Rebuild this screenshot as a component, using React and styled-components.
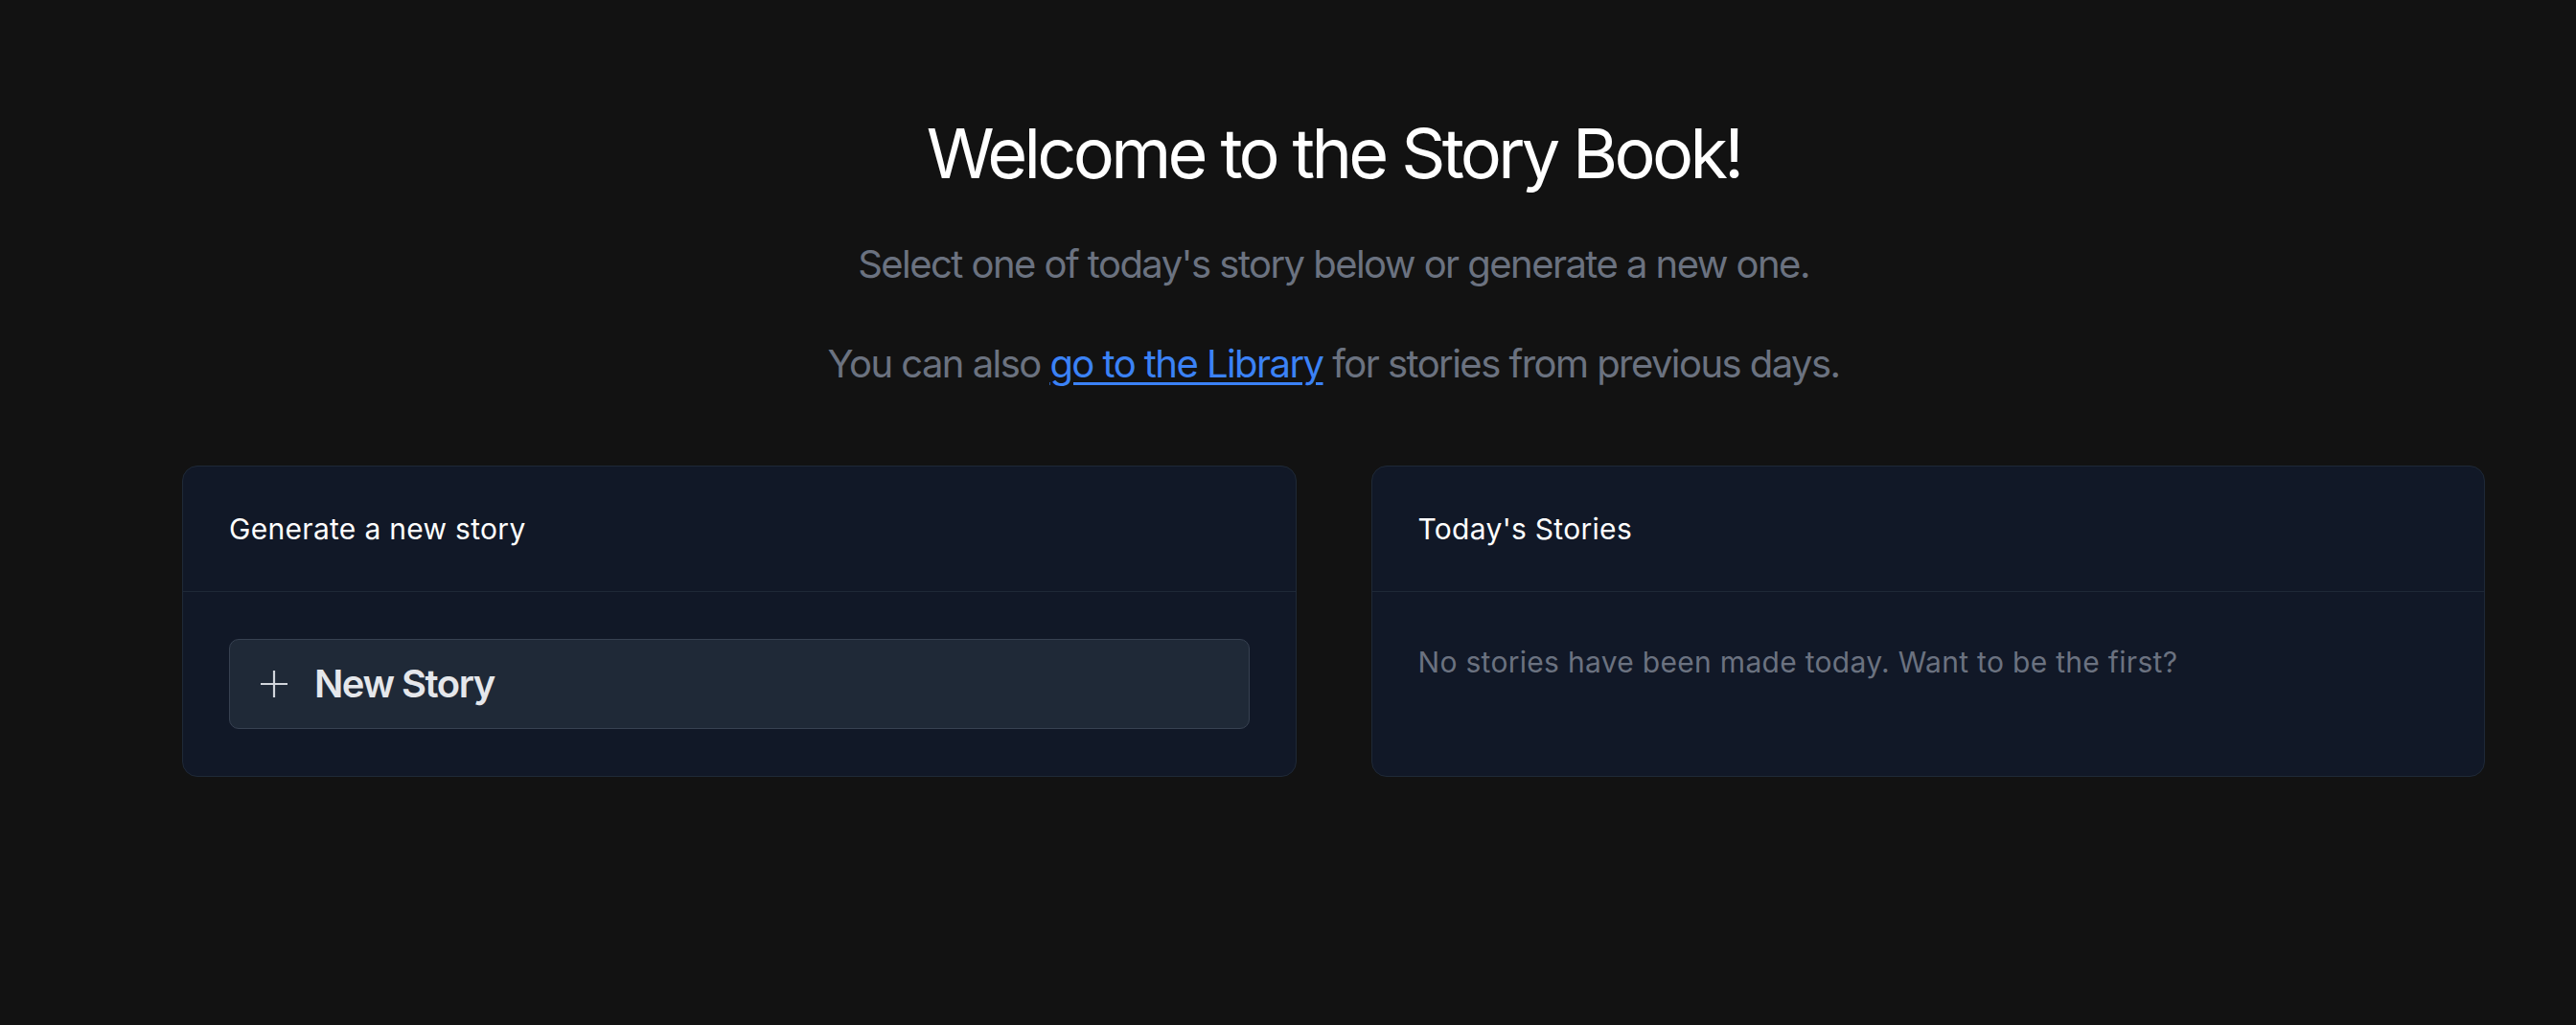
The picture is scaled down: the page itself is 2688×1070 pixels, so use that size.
import React from 'react';
import styled, { createGlobalStyle } from 'styled-components';

const GlobalStyle = createGlobalStyle`
  html, body {
    margin: 0;
    padding: 0;
    background: #121212;
  }
  body {
    font-family: Inter, "Noto Sans", "Liberation Sans", sans-serif;
    -webkit-font-smoothing: antialiased;
  }
  * { box-sizing: border-box; }
`;

const Page = styled.main`
  min-height: 1070px;
  padding: 120px 95px 0 190px;
  color: #fff;
`;

const Hero = styled.header`
  display: flex;
  flex-direction: column;
  align-items: center;
  gap: 48px;
  text-align: center;
`;

const Title = styled.h1`
  margin: 0;
  font-size: 72px;
  line-height: 80px;
  font-weight: 400;
  letter-spacing: -3.7px;
  color: #fff;
`;

const Lead = styled.p`
  margin: 0;
  font-size: 40px;
  line-height: 56px;
  letter-spacing: -1.55px;
  color: #6b7280;
`;

const LibraryLink = styled.a`
  color: #3b82f6;
  text-decoration: underline;
  text-decoration-thickness: 3px;
  text-underline-offset: 5px;
  cursor: pointer;
`;

const Columns = styled.section`
  display: grid;
  grid-template-columns: 1fr 1fr;
  gap: 78px;
  margin-top: 78px;
`;

const Card = styled.div`
  display: flex;
  flex-direction: column;
  background: #111827;
  border: 1px solid #1f2937;
  border-radius: 16px;
  overflow: hidden;
`;

const CardHeader = styled.div`
  padding: 41px 48px;
  border-bottom: 1px solid #1f2937;
  font-size: 30px;
  line-height: 48px;
  letter-spacing: 0.3px;
  color: #fff;
`;

const CardBody = styled.div`
  flex: 1;
  padding: 49px 48px;
`;

const Muted = styled.p`
  margin: 0;
  font-size: 30px;
  line-height: 48px;
  letter-spacing: 0.3px;
  color: #6b7280;
`;

const NewStoryButton = styled.button`
  display: flex;
  align-items: center;
  gap: 28px;
  width: 100%;
  padding: 18px 32px;
  background: #1f2937;
  border: 1px solid #374151;
  border-radius: 10px;
  color: #e5e7eb;
  font-family: inherit;
  font-size: 40px;
  line-height: 56px;
  font-weight: 600;
  letter-spacing: -1.5px;
  text-align: left;
  cursor: pointer;
`;

const PlusIcon = () => (
  <svg width="28" height="28" viewBox="0 0 28 28" fill="none" stroke="#d1d5db" strokeWidth="2.2">
    <path d="M0 14h28M14 0v28" />
  </svg>
);

export default function App() {
  return (
    <>
      <GlobalStyle />
      <Page>
        <Hero>
          <Title>Welcome to the Story Book!</Title>
          <Lead>Select one of today's story below or generate a new one.</Lead>
          <Lead>
            You can also <LibraryLink>go to the Library</LibraryLink> for stories from previous days.
          </Lead>
        </Hero>
        <Columns>
          <Card>
            <CardHeader>Generate a new story</CardHeader>
            <CardBody>
              <NewStoryButton>
                <PlusIcon />
                New Story
              </NewStoryButton>
            </CardBody>
          </Card>
          <Card>
            <CardHeader>Today's Stories</CardHeader>
            <CardBody>
              <Muted>No stories have been made today. Want to be the first?</Muted>
            </CardBody>
          </Card>
        </Columns>
      </Page>
    </>
  );
}
